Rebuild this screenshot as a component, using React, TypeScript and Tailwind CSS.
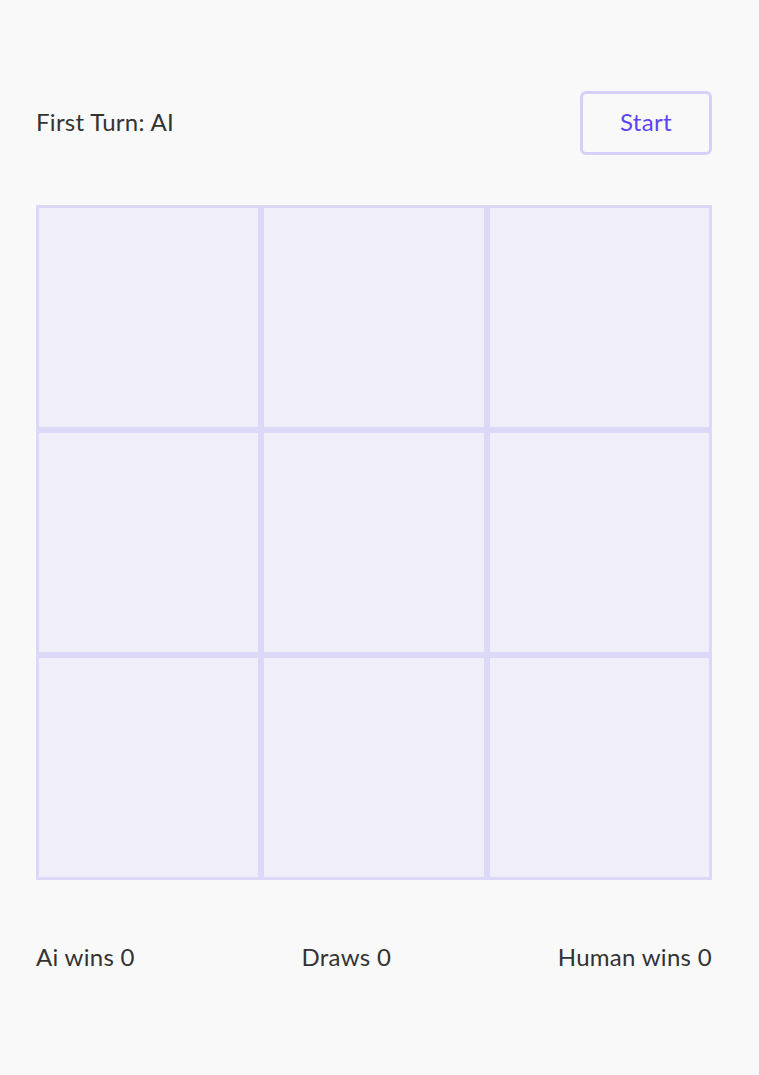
import React from 'react';

const cells = Array.from({ length: 9 });

const App = () => {
  return (
    <div className="min-h-[1075px] w-full bg-[#f9f9f9] text-[#333333]" style={{ fontFamily: 'Lato, "Open Sans", sans-serif' }}>
      <div className="ml-[36px] w-[676px] pt-[91px]">
        {/* Header */}
        <div className="flex items-center justify-between">
          <p className="-mt-[2px] text-[24px] leading-none tracking-[0.3px]">First Turn: AI</p>
          <button className="h-[64px] w-[132px] rounded-[6px] border-[3px] border-[#d5cffa] pb-[3px] text-[24px] leading-none tracking-[0.3px] text-[#5b45f5]">
            Start
          </button>
        </div>

        {/* Board */}
        <div className="mt-[50px] grid h-[675px] grid-cols-3 grid-rows-3">
          {cells.map((_, i) => (
            <div key={i} className="border-[3px] border-[#dcd8f7] bg-[#f0eef9]" />
          ))}
        </div>

        {/* Score */}
        <div className="mt-[65px] flex items-center justify-between text-[24px] leading-none tracking-[0.3px]">
          <span>Ai wins 0</span>
          <span>Draws 0</span>
          <span>Human wins 0</span>
        </div>
      </div>
    </div>
  );
};

export default App;
